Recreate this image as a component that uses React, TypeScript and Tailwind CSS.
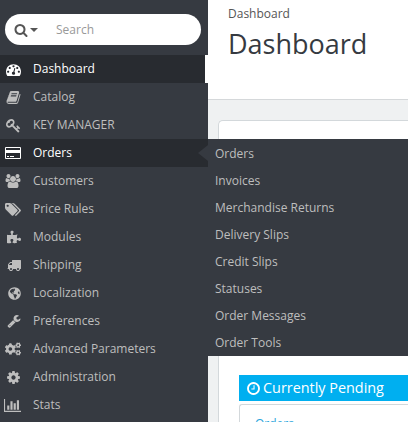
import type { ReactNode } from 'react'
import { FaCogs, FaGlobeAmericas, FaPuzzlePiece } from 'react-icons/fa'

interface GlyphProps {
    d: string
    units?: number
    size?: number
}

interface MenuItem {
    label: string
    icon: ReactNode
    state?: 'current' | 'open'
}

// Glyphs are drawn on a 1792 unit high grid, the width differs per icon
const Glyph = ({ d, units = 1792, size = 14 }: GlyphProps) => (
    <svg viewBox={`0 0 ${units} 1792`} width={(size * units) / 1792} height={size} fill="currentColor" className="shrink-0">
        <path d={d} />
    </svg>
)

const paths = {
    search: 'M1216 832q0-185-131.5-316.5t-316.5-131.5-316.5 131.5-131.5 316.5 131.5 316.5 316.5 131.5 316.5-131.5 131.5-316.5zm512 832q0 52-38 90t-90 38q-54 0-90-38l-343-342q-179 124-399 124-143 0-273.5-55.5t-225-150-150-225-55.5-273.5 55.5-273.5 150-225 225-150 273.5-55.5 273.5 55.5 225 150 150 225 55.5 273.5q0 220-124 399l343 343q37 37 37 90z',
    dashboard: 'M384 1152q0-53-37.5-90.5t-90.5-37.5-90.5 37.5-37.5 90.5 37.5 90.5 90.5 37.5 90.5-37.5 37.5-90.5zm192-448q0-53-37.5-90.5t-90.5-37.5-90.5 37.5-37.5 90.5 37.5 90.5 90.5 37.5 90.5-37.5 37.5-90.5zm428 481l101-382q6-26-7.5-48.5t-38.5-29.5-48 6.5-30 39.5l-101 382q-60 5-107 43.5t-63 98.5q-20 77 20 146t117 89 146-20 89-117q16-60-6-117t-72-91zm660-33q0-53-37.5-90.5t-90.5-37.5-90.5 37.5-37.5 90.5 37.5 90.5 90.5 37.5 90.5-37.5 37.5-90.5zm-640-640q0-53-37.5-90.5t-90.5-37.5-90.5 37.5-37.5 90.5 37.5 90.5 90.5 37.5 90.5-37.5 37.5-90.5zm448 192q0-53-37.5-90.5t-90.5-37.5-90.5 37.5-37.5 90.5 37.5 90.5 90.5 37.5 90.5-37.5 37.5-90.5zm320 448q0 261-141 483-19 29-54 29h-1402q-35 0-54-29-141-221-141-483 0-182 71-348t191-286 286-191 348-71 348 71 286 191 191 286 71 348z',
    book: 'M1703 478q40 57 18 129l-275 906q-19 64-76.5 107.5t-122.5 43.5h-923q-77 0-148.5-53.5t-99.5-131.5q-24-67-2-127 0-4 3-27t4-37q1-8-3-21.5t-3-19.5q2-11 8-21t16.5-23.5 16.5-23.5q23-38 45-91.5t30-91.5q3-10 .5-30t-.5-28q3-11 17-28t17-23q21-36 42-92t25-90q1-9-2.5-32t.5-28q4-13 22-30.5t22-22.5q19-26 42.5-84.5t27.5-96.5q1-8-3-25.5t-2-26.5q2-8 9-18t18-23 17-21q8-12 16.5-30.5t15-35 16-36 19.5-32 26.5-23.5 36-11.5 47.5 5.5l-1 3q38-9 51-9h761q74 0 114 56t18 130l-274 906q-36 119-71.5 153.5t-128.5 34.5h-869q-27 0-38 15-11 16-1 43 24 70 144 70h923q29 0 56-15.5t35-41.5l300-987q7-22 5-57 38 15 59 43zm-1064 2q-4 13 2 22.5t20 9.5h608q13 0 25.5-9.5t16.5-22.5l21-64q4-13-2-22.5t-20-9.5h-608q-13 0-25.5 9.5t-16.5 22.5zm-83 256q-4 13 2 22.5t20 9.5h608q13 0 25.5-9.5t16.5-22.5l21-64q4-13-2-22.5t-20-9.5h-608q-13 0-25.5 9.5t-16.5 22.5z',
    key: 'M832 512q0-80-56-136t-136-56-136 56-56 136q0 42 19 83-41-19-83-19-80 0-136 56t-56 136 56 136 136 56 136-56 56-136q0-42-19-83 41 19 83 19 80 0 136-56t56-136zm851 704q0 17-49 66t-66 49q-9 0-28.5-16t-36.5-33-38.5-40-24.5-26l-96 96 220 220q28 28 28 68 0 42-39 81t-81 39q-40 0-68-28l-671-671q-176 131-365 131-163 0-265.5-102.5t-102.5-265.5q0-160 95-313t248-248 313-95q163 0 265.5 102.5t102.5 265.5q0 189-131 365l355 355 96-96q-3-3-26-24.5t-40-38.5-33-36.5-16-28.5q0-17 49-66t66-49q13 0 23 10 6 6 46 44.5t82 79.5 86.5 86 73 78 28.5 41z',
    users: 'M657 896q-162 5-265 128h-134q-82 0-138-40.5t-56-118.5q0-353 124-353 6 0 43.5 21t97.5 42.5 119 21.5q67 0 133-23-5 37-5 66 0 139 81 256zm1071 637q0 120-73 189.5t-194 69.5h-874q-121 0-194-69.5t-73-189.5q0-53 3.5-103.5t14-109 26.5-108.5 43-97.5 62-81 85.5-53.5 111.5-20q10 0 43 21.5t73 48 107 48 135 21.5 135-21.5 107-48 73-48 43-21.5q61 0 111.5 20t85.5 53.5 62 81 43 97.5 26.5 108.5 14 109 3.5 103.5zm-1024-1277q0 106-75 181t-181 75-181-75-75-181 75-181 181-75 181 75 75 181zm704 384q0 159-112.5 271.5t-271.5 112.5-271.5-112.5-112.5-271.5 112.5-271.5 271.5-112.5 271.5 112.5 112.5 271.5zm576 225q0 78-56 118.5t-138 40.5h-134q-103-123-265-128 81-117 81-256 0-29-5-66 66 23 133 23 59 0 119-21.5t97.5-42.5 43.5-21q124 0 124 353zm-128-609q0 106-75 181t-181 75-181-75-75-181 75-181 181-75 181 75 75 181z',
    tags: 'M448 448q0-53-37.5-90.5t-90.5-37.5-90.5 37.5-37.5 90.5 37.5 90.5 90.5 37.5 90.5-37.5 37.5-90.5zm1067 576q0 53-37 90l-491 492q-39 37-91 37-53 0-90-37l-715-716q-38-37-64.5-101t-26.5-117v-416q0-52 38-90t90-38h416q53 0 117 26.5t102 64.5l715 714q37 39 37 91zm384 0q0 53-37 90l-491 492q-39 37-91 37-36 0-59-14t-53-45l470-470q37-37 37-90 0-52-37-91l-715-714q-38-38-102-64.5t-117-26.5h224q53 0 117 26.5t102 64.5l715 714q37 39 37 91z',
    truck: 'M640 1408q0-52-38-90t-90-38-90 38-38 90 38 90 90 38 90-38 38-90zm-384-512h384v-256h-158q-13 0-22 9l-195 195q-9 9-9 22v30zm1280 512q0-52-38-90t-90-38-90 38-38 90 38 90 90 38 90-38 38-90zm256-1088v1024q0 15-4 26.5t-13.5 18.5-16.5 11.5-23.5 6-22.5 2-25.5 0-22.5-.5q0 106-75 181t-181 75-181-75-75-181h-384q0 106-75 181t-181 75-181-75-75-181h-64q-3 0-22.5.5t-25.5 0-22.5-2-23.5-6-16.5-11.5-13.5-18.5-4-26.5q0-26 19-45t45-19v-320q0-8-.5-35t0-38 2.5-34.5 6.5-37 14-30.5 22.5-30l198-198q19-19 50.5-32t58.5-13h160v-192q0-26 19-45t45-19h1024q26 0 45 19t19 45z',
    wrench: 'M448 1472q0-26-19-45t-45-19-45 19-19 45 19 45 45 19 45-19 19-45zm644-420l-682 682q-37 37-90 37-52 0-91-37l-106-108q-38-36-38-90 0-53 38-91l681-681q39 98 114.5 173.5t173.5 114.5zm634-435q0 39-23 106-47 134-164.5 217.5t-258.5 83.5q-185 0-316.5-131.5t-131.5-316.5 131.5-316.5 316.5-131.5q58 0 121.5 16.5t107.5 46.5q16 11 16 28t-16 28l-293 169v224l193 107q5-3 79-48.5t135.5-81 70.5-35.5q15 0 23.5 10t8.5 25z',
    cog: 'M1152 896q0-106-75-181t-181-75-181 75-75 181 75 181 181 75 181-75 75-181zm512-109v222q0 12-8 23t-20 13l-185 28q-19 54-39 91 35 50 107 138 10 12 10 25t-9 23q-27 37-99 108t-94 71q-12 0-26-9l-138-108q-44 23-91 38-16 136-29 186-7 28-36 28h-222q-14 0-24.5-8.5t-11.5-21.5l-28-184q-49-16-90-37l-141 107q-10 9-25 9-14 0-25-11-126-114-165-168-7-10-7-23 0-12 8-23 15-21 51-66.5t54-70.5q-27-50-41-99l-183-27q-13-2-21-12.5t-8-23.5v-222q0-12 8-23t19-13l186-28q14-46 39-92-40-57-107-138-10-12-10-24 0-10 9-23 26-36 98.5-107.5t94.5-71.5q13 0 26 10l138 107q44-23 91-38 16-136 29-186 7-28 36-28h222q14 0 24.5 8.5t11.5 21.5l28 184q49 16 90 37l142-107q9-9 24-9 13 0 25 10 129 119 165 170 7 8 7 22 0 12-8 23-15 21-51 66.5t-54 70.5q26 50 41 98l183 28q13 2 21 12.5t8 23.5z',
    chart: 'M640 896v512h-256v-512h256zm384-512v1024h-256v-1024h256zm1024 1152v128h-2048v-1536h128v1408h1920zm-640-896v768h-256v-768h256zm384-384v1152h-256v-1152h256z',
    clock: 'M1024 544v448q0 14-9 23t-23 9h-320q-14 0-23-9t-9-23v-64q0-14 9-23t23-9h224v-352q0-14 9-23t23-9h64q14 0 23 9t9 23zm416 352q0-148-73-273t-198-198-273-73-273 73-198 198-73 273 73 273 198 198 273 73 273-73 198-198 73-273zm224 0q0 209-103 385.5t-279.5 279.5-385.5 103-385.5-103-279.5-279.5-103-385.5 103-385.5 279.5-279.5 385.5-103 385.5 103 279.5 279.5 103 385.5z',
}

const CardIcon = () => (
    <svg viewBox="0 0 16 12" width="16" height="12" fill="currentColor">
        <path fillRule="evenodd" d="M1 0h14a1 1 0 0 1 1 1v10a1 1 0 0 1-1 1H1a1 1 0 0 1-1-1V1a1 1 0 0 1 1-1zM1 1v2h14V1zM1 6v5h14V6z" />
        <path d="M2 9h2v1H2zM5 9h4v1H5z" />
    </svg>
)

const menu: MenuItem[] = [
    { label: 'Dashboard', icon: <Glyph d={paths.dashboard} size={15} />, state: 'current' },
    { label: 'Catalog', icon: <Glyph d={paths.book} size={15} /> },
    { label: 'KEY MANAGER', icon: <Glyph d={paths.key} size={15} /> },
    { label: 'Orders', icon: <CardIcon />, state: 'open' },
    { label: 'Customers', icon: <Glyph d={paths.users} units={2048} /> },
    { label: 'Price Rules', icon: <Glyph d={paths.tags} units={1920} size={15} /> },
    { label: 'Modules', icon: <FaPuzzlePiece size={14} /> },
    { label: 'Shipping', icon: <Glyph d={paths.truck} /> },
    { label: 'Localization', icon: <FaGlobeAmericas size={13} /> },
    { label: 'Preferences', icon: <Glyph d={paths.wrench} /> },
    { label: 'Advanced Parameters', icon: <FaCogs size={16} /> },
    { label: 'Administration', icon: <Glyph d={paths.cog} size={15} /> },
    { label: 'Stats', icon: <Glyph d={paths.chart} units={2048} size={15} /> },
]

const orderLinks = [
    'Orders',
    'Invoices',
    'Merchandise Returns',
    'Delivery Slips',
    'Credit Slips',
    'Statuses',
    'Order Messages',
    'Order Tools',
]

const rowStyles = {
    current: 'mr-[3px] bg-[#282b30] text-white',
    open: 'bg-[#282b30] text-white',
    idle: 'bg-[#363a41] text-[#bebebe]',
}

const SidebarItem = ({ label, icon, state }: MenuItem) => (
    <li className={`relative flex h-7 items-center ${rowStyles[state ?? 'idle']}`}>
        <span className="flex w-[21px] shrink-0 justify-end">{icon}</span>
        <span className="ml-3">{label}</span>
        {state === 'open' && (
            <>
                <span className="absolute top-1.5 right-0 border-y-8 border-r-[10px] border-y-transparent border-r-[#363a41]" />
                <ul className="absolute top-0 left-full z-10 h-[217px] w-[200px] bg-[#363a41] pt-px pl-[7px] text-[#bebebe]">
                    {orderLinks.map((link) => (
                        <li key={link} className="h-[27px] leading-[27px]">{link}</li>
                    ))}
                </ul>
            </>
        )}
    </li>
)

const App = () => {
    return (
        <div className="flex h-[422px] w-[408px] overflow-hidden bg-white font-['Open_Sans',sans-serif] text-xs">
            {/* Sidebar */}
            <nav className="flex w-[208px] shrink-0 flex-col">
                <div className="h-[55px] bg-[#363a41] pt-3.5 pl-[5px]">
                    <div className="flex h-[31px] w-[196px] items-center rounded-full bg-white pl-[9px] text-[#555]">
                        <Glyph d={paths.search} />
                        <span className="ml-[2px] border-x-4 border-t-4 border-x-transparent border-t-[#555]" />
                        <span className="ml-[18px] text-[#999]">Search</span>
                    </div>
                </div>
                <ul>
                    {menu.map((item) => (
                        <SidebarItem key={item.label} {...item} />
                    ))}
                </ul>
                <div className="flex-1 bg-[#363a41]" />
            </nav>

            {/* Page */}
            <main className="flex min-w-0 flex-1 flex-col bg-[#eff1f2]">
                <header className="h-[100px] shrink-0 border-b border-[#d5d8da] bg-white pt-[5px] pl-5">
                    <div className="leading-[18px] text-[#555]">Dashboard</div>
                    <h1 className="mt-0.5 text-[27px] leading-[38px] text-[#363a41]">Dashboard</h1>
                </header>
                <section className="mt-5 ml-2.5 flex-1 rounded-tl-[5px] border-t border-l border-[#d3d8db] bg-white pt-[254px] pl-5">
                    <h2 className="flex h-[26px] items-center bg-[#00aff0] pl-[7px] text-[14.4px] text-white">
                        <Glyph d={paths.clock} size={15} />
                        <span className="ml-0.5">Currently Pending</span>
                    </h2>
                    <div className="mt-[3px] h-20 rounded-tl-[3px] border-t border-l border-[#d3d8db] pt-[11px] pl-[15px] text-[#2ba5dc]">
                        Orders
                    </div>
                </section>
            </main>
        </div>
    )
}

export default App
